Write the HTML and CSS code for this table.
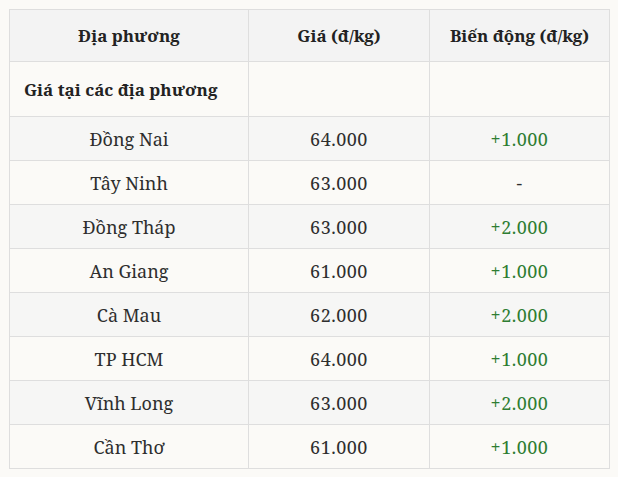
FILE: index.html
```html
<!DOCTYPE html>
<html lang="vi">
<head>
<meta charset="utf-8">
<link rel="stylesheet" href="styles.css">
</head>
<body>
<table class="price-table">
  <colgroup>
    <col class="col-place">
    <col class="col-price">
    <col class="col-change">
  </colgroup>
  <thead>
    <tr>
      <th>Địa phương</th>
      <th>Giá (đ/kg)</th>
      <th>Biến động (đ/kg)</th>
    </tr>
  </thead>
  <tbody>
    <tr class="group-row">
      <td class="group-title">Giá tại các địa phương</td>
      <td></td>
      <td></td>
    </tr>
    <tr><td>Đồng Nai</td><td class="num">64.000</td><td class="num up">+1.000</td></tr>
    <tr><td>Tây Ninh</td><td class="num">63.000</td><td class="num">-</td></tr>
    <tr><td>Đồng Tháp</td><td class="num">63.000</td><td class="num up">+2.000</td></tr>
    <tr><td>An Giang</td><td class="num">61.000</td><td class="num up">+1.000</td></tr>
    <tr><td>Cà Mau</td><td class="num">62.000</td><td class="num up">+2.000</td></tr>
    <tr><td>TP HCM</td><td class="num">64.000</td><td class="num up">+1.000</td></tr>
    <tr><td>Vĩnh Long</td><td class="num">63.000</td><td class="num up">+2.000</td></tr>
    <tr><td>Cần Thơ</td><td class="num">61.000</td><td class="num up">+1.000</td></tr>
  </tbody>
</table>
</body>
</html>
```
FILE: styles.css
```css
html, body {
  margin: 0;
  padding: 0;
  background: #fbfaf7;
}
body {
  padding: 9px 9px 0 9px;
  font-family: "Noto Serif", "DejaVu Serif", serif;
  color: #2e2e2e;
}
.price-table {
  width: 600px;
  border-collapse: collapse;
  table-layout: fixed;
  font-size: 18px;
}
.col-place { width: 239px; }
.col-price { width: 181px; }
.col-change { width: 180px; }
.price-table th,
.price-table td {
  box-sizing: border-box;
  border: 1px solid #dedede;
  text-align: center;
  padding: 0;
}
.price-table th {
  height: 52px;
  background: #f3f3f3;
  font-size: 17px;
  font-weight: 700;
  color: #222;
}
.price-table td {
  height: 44px;
}
.price-table .group-row td {
  height: 55px;
}
.price-table .group-title {
  text-align: left;
  font-size: 17px;
  font-weight: 700;
  padding-left: 14px;
  color: #222;
}
.num {
  letter-spacing: 0.5px;
}
.price-table tbody tr {
  background: #fbfaf7;
}
.price-table tbody tr:nth-child(even) {
  background: #f6f6f5;
}
.up {
  color: #2e7d32;
}
```
